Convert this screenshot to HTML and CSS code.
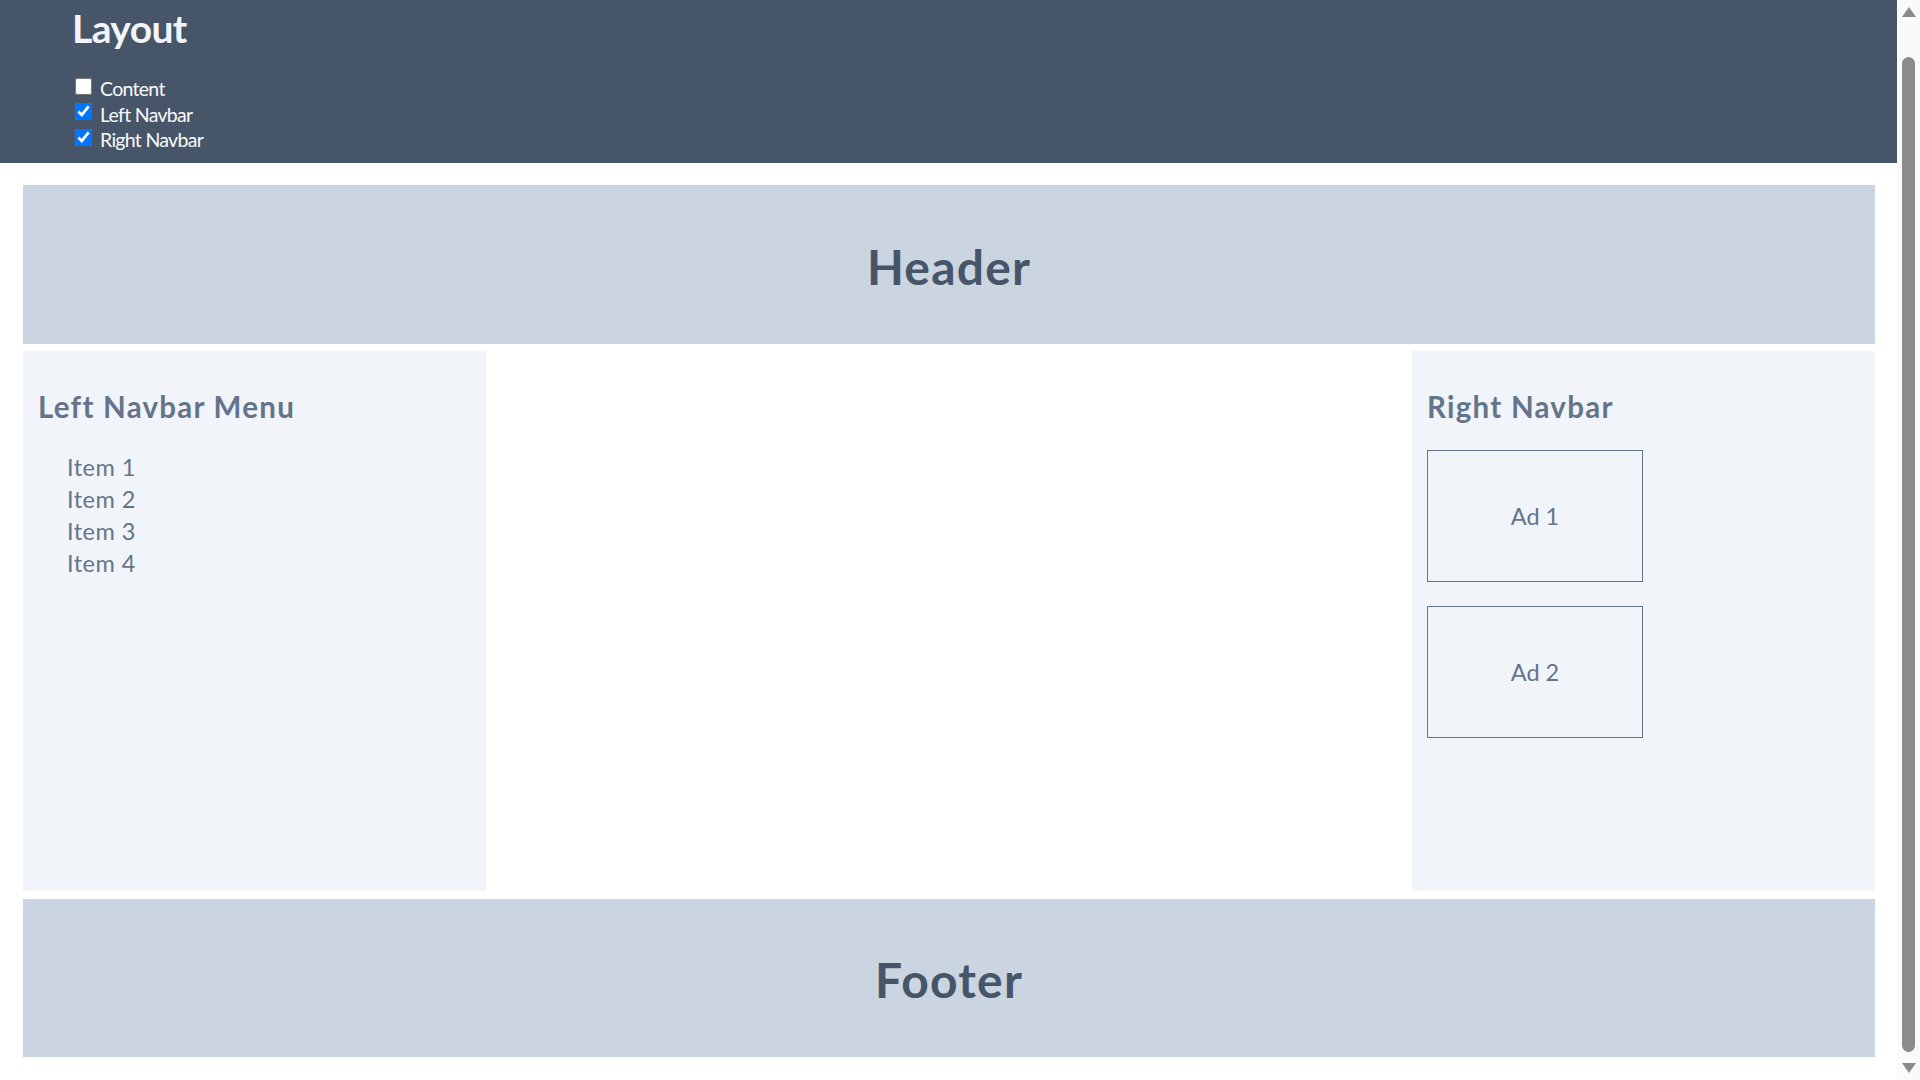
FILE: index.html
```html
<!DOCTYPE html>
<html lang="en">
<head>
<meta charset="utf-8">
<title>Layout</title>
<link rel="stylesheet" href="styles.css">
</head>
<body>
<div class="page">
  <div class="controls">
    <h1 class="controls-title">Layout</h1>
    <div class="toggles">
      <label class="toggle"><input type="checkbox" class="toggle-box"><span class="toggle-text">Content</span></label>
      <label class="toggle"><input type="checkbox" class="toggle-box" checked><span class="toggle-text">Left Navbar</span></label>
      <label class="toggle"><input type="checkbox" class="toggle-box" checked><span class="toggle-text">Right Navbar</span></label>
    </div>
  </div>
  <div class="layout">
    <header class="site-header"><h1 class="band-title">Header</h1></header>
    <div class="middle">
      <nav class="side-panel">
        <h2 class="panel-title">Left Navbar Menu</h2>
        <ul class="menu">
          <li class="menu-item">Item 1</li>
          <li class="menu-item">Item 2</li>
          <li class="menu-item">Item 3</li>
          <li class="menu-item">Item 4</li>
        </ul>
      </nav>
      <main class="content"></main>
      <aside class="side-panel">
        <h2 class="panel-title">Right Navbar</h2>
        <div class="ads">
          <div class="ad">Ad 1</div>
          <div class="ad">Ad 2</div>
        </div>
      </aside>
    </div>
    <footer class="site-footer"><h1 class="band-title">Footer</h1></footer>
  </div>
</div>
<div class="scrollbar" aria-hidden="true">
  <div class="scroll-arrow scroll-arrow-up"></div>
  <div class="scroll-thumb"></div>
  <div class="scroll-arrow scroll-arrow-down"></div>
</div>
</body>
</html>
```
FILE: styles.css
```css
html {
  background: #ffffff;
}

body {
  margin: 0;
  height: 100vh;
  overflow: hidden;
  display: flex;
  font-family: Lato, "Open Sans", "Liberation Sans", sans-serif;
  color: #64748b;
}

.page {
  flex: 1;
  min-width: 0;
}

/* Scrollbar replica */
.scrollbar {
  width: 23px;
  flex: none;
  box-sizing: border-box;
  height: 100vh;
  padding: 7px 4px;
  background: #fafafa;
  display: flex;
  flex-direction: column;
  align-items: center;
}

.scroll-arrow {
  width: 0;
  height: 0;
  border-left: 7.5px solid transparent;
  border-right: 7.5px solid transparent;
}

.scroll-arrow-up {
  border-bottom: 10px solid #8b8b8b;
}

.scroll-arrow-down {
  border-top: 10px solid #8b8b8b;
}

.scroll-thumb {
  flex: 1;
  width: 13px;
  margin: 40px 0 11px;
  background: #8b8b8b;
  border-radius: 7px;
}

/* Top control bar */
.controls {
  background: #475569;
  padding: 4px 0 10px 71px;
}

.controls-title {
  margin: 0 0 0 1px;
  font-size: 39px;
  line-height: 48px;
  font-weight: 700;
  letter-spacing: -0.6px;
  color: #f1f5f9;
}

.toggles {
  margin-top: 24px;
  display: flex;
  flex-direction: column;
}

.toggle {
  display: flex;
  align-items: center;
  height: 25.5px;
  font-size: 19.5px;
  line-height: 25.5px;
  letter-spacing: -0.7px;
  color: #f8fafc;
}

.toggle-box {
  width: 17px;
  height: 17px;
  margin: 0 8px 5px 4px;
}

/* Page layout */
.layout {
  display: flex;
  flex-direction: column;
  padding: 22px 22px 23px 23px;
}

.site-header,
.site-footer {
  display: flex;
  align-items: center;
  justify-content: center;
  background: #cbd5e1;
  box-sizing: border-box;
}

.site-header {
  height: 159px;
  padding-top: 6px;
}

.site-footer {
  height: 158px;
  margin-top: 8px;
  padding-top: 5px;
}

.band-title {
  margin: 0;
  font-size: 48px;
  line-height: 1.2;
  font-weight: 700;
  letter-spacing: 1.2px;
  color: #475569;
}

.middle {
  margin-top: 7px;
  height: 540px;
  display: grid;
  grid-template-columns: 1fr 2fr 1fr;
}

.side-panel {
  background: #f1f5f9;
  padding: 15px;
}

.content {
  background: #ffffff;
}

.panel-title {
  margin: 21px 0 0;
  font-size: 29.5px;
  line-height: 40px;
  font-weight: 700;
  letter-spacing: 1.25px;
  color: #64748b;
}

.menu {
  list-style: none;
  margin: 24px 0 0;
  padding: 0 0 0 29px;
}

.menu-item {
  font-size: 23.5px;
  line-height: 32px;
  letter-spacing: 0.5px;
  color: #64748b;
}

.ads {
  margin-top: 23px;
  display: flex;
  flex-direction: column;
  gap: 24px;
}

.ad {
  width: 216px;
  height: 132px;
  box-sizing: border-box;
  border: 1px solid #64748b;
  display: flex;
  align-items: center;
  justify-content: center;
  font-size: 23.5px;
  color: #64748b;
}
```
